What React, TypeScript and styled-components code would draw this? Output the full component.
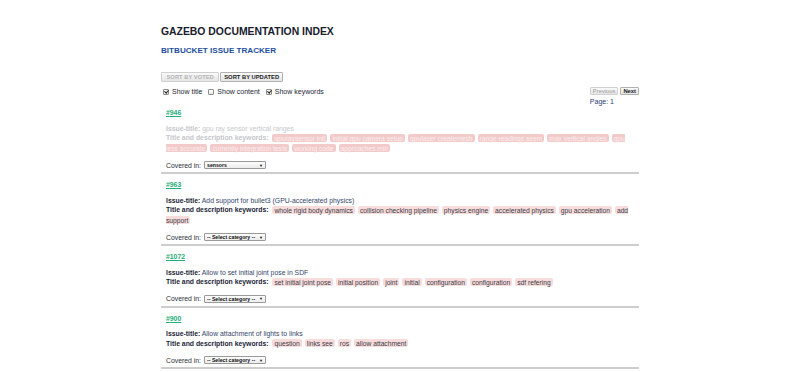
import React from "react";
import styled, { createGlobalStyle, css } from "styled-components";

interface Issue {
  id: number;
  title: string;
  keywords: string[];
  category: string;
  faded?: boolean;
}

const issues: Issue[] = [
  {
    id: 946,
    title: "gpu ray sensor vertical ranges",
    keywords: [
      "gpuraysensor init",
      "initial gpu camera setup",
      "gpulaser createmesh",
      "range readings seem",
      "max vertical angles",
      "gpu less accurate",
      "currently integration tests",
      "working code",
      "approaches min",
    ],
    category: "sensors",
    faded: true,
  },
  {
    id: 963,
    title: "Add support for bullet3 (GPU-accelerated physics)",
    keywords: [
      "whole rigid body dynamics",
      "collision checking pipeline",
      "physics engine",
      "accelerated physics",
      "gpu acceleration",
      "add support",
    ],
    category: "",
  },
  {
    id: 1072,
    title: "Allow to set initial joint pose in SDF",
    keywords: [
      "set initial joint pose",
      "initial position",
      "joint",
      "initial",
      "configuration",
      "configuration",
      "sdf refering",
    ],
    category: "",
  },
  {
    id: 900,
    title: "Allow attachment of lights to links",
    keywords: ["question", "links see", "ros", "allow attachment"],
    category: "",
  },
];

const categories = ["sensors", "physics", "rendering", "sdf", "ros"];

const App: React.FC = () => {
  return (
    <>
      <GlobalStyle />
      <Page>
        <Title>Gazebo Documentation Index</Title>
        <Subtitle>Bitbucket Issue Tracker</Subtitle>

        <SortBar>
          <SortButton disabled>Sort by voted</SortButton>
          <SortButton>Sort by updated</SortButton>
        </SortBar>

        <Toolbar>
          <Toggles>
            <Toggle>
              <Check type="checkbox" defaultChecked />
              Show title
            </Toggle>
            <Toggle>
              <Check type="checkbox" />
              Show content
            </Toggle>
            <Toggle>
              <Check type="checkbox" defaultChecked />
              Show keywords
            </Toggle>
          </Toggles>
          <Pager>
            <PagerButtons>
              <PagerButton disabled>Previous</PagerButton>
              <PagerButton $strong>Next</PagerButton>
            </PagerButtons>
            <PageLabel>Page: 1</PageLabel>
          </Pager>
        </Toolbar>

        <IssueList>
          {issues.map((issue) => (
            <IssueCard key={issue.id}>
              <IssueLink href="#">#{issue.id}</IssueLink>
              <Field $faded={issue.faded}>
                <Label>Issue-title:</Label> {issue.title}
              </Field>
              <Keywords $faded={issue.faded}>
                <Label>Title and description keywords:</Label>{" "}
                {issue.keywords.map((k, i) => (
                  <Tag key={i}>{k}</Tag>
                ))}
              </Keywords>
              <Covered>
                Covered in:
                <SelectWrap>
                  <CategorySelect defaultValue={issue.category}>
                    <option value="">-- Select category --</option>
                    {categories.map((c) => (
                      <option key={c} value={c}>
                        {c}
                      </option>
                    ))}
                  </CategorySelect>
                </SelectWrap>
              </Covered>
            </IssueCard>
          ))}
        </IssueList>
      </Page>
    </>
  );
};

const GlobalStyle = createGlobalStyle`
  body {
    margin: 0;
    background: #fff;
    font-family: "Liberation Sans", Arial, sans-serif;
    color: #1d2736;
  }
`;

const Page = styled.div`
  width: 478px;
  margin: 0 auto;
  padding-top: 26px;
`;

const Title = styled.h1`
  margin: 0;
  font-size: 10.4px;
  line-height: 12px;
  font-weight: bold;
  text-transform: uppercase;
  color: #17202c;
`;

const Subtitle = styled.h2`
  margin: 8px 0 0;
  font-size: 8.1px;
  line-height: 10px;
  font-weight: bold;
  text-transform: uppercase;
  color: #1d4f9e;
`;

const SortBar = styled.div`
  display: flex;
  gap: 1px;
  margin-top: 16px;
`;

const SortButton = styled.button`
  height: 10px;
  padding: 0 3px;
  font-family: inherit;
  font-size: 5.8px;
  font-weight: bold;
  text-transform: uppercase;
  line-height: 8px;
  color: #1a1a1a;
  background: linear-gradient(#fafafa, #e4e4e4);
  border: 1px solid #b0b0b0;
  border-radius: 1px;

  &:disabled {
    padding: 0 4.5px;
    color: #b4b4b4;
    border-color: #cfcfcf;
  }
`;

const Toolbar = styled.div`
  display: flex;
  justify-content: space-between;
  align-items: flex-start;
  height: 16px;
  margin-top: 4px;
`;

const Toggles = styled.div`
  display: flex;
  gap: 4px;
  margin-top: 1px;
`;

const Toggle = styled.label`
  display: flex;
  align-items: center;
  font-size: 7px;
  line-height: 9px;
  color: #1d2736;
`;

const Check = styled.input`
  appearance: none;
  position: relative;
  width: 6px;
  height: 6px;
  margin: 0 3px 0 2px;
  border: 1px solid #8c8c8c;
  border-radius: 1px;
  background: linear-gradient(#ffffff, #e8e8e8);

  &:checked::after {
    content: "";
    position: absolute;
    left: 1px;
    top: -0.5px;
    width: 1.6px;
    height: 3px;
    border: solid #222;
    border-width: 0 1px 1px 0;
    transform: rotate(40deg);
  }
`;

const Pager = styled.div`
  display: flex;
  flex-direction: column;
  align-items: flex-start;
  margin-top: 1px;
`;

const PagerButtons = styled.div`
  display: flex;
  gap: 2px;
`;

const PagerButton = styled.button<{ $strong?: boolean }>`
  height: 8px;
  padding: 0 2px;
  font-family: inherit;
  font-size: 5.8px;
  line-height: 6px;
  font-weight: ${(p) => (p.$strong ? "bold" : "normal")};
  color: #1a1a1a;
  background: linear-gradient(#fafafa, #e4e4e4);
  border: 1px solid #b0b0b0;
  border-radius: 1px;

  &:disabled {
    color: #9a9a9a;
    border-color: #cfcfcf;
  }
`;

const PageLabel = styled.div`
  margin-top: 2px;
  font-size: 7px;
  line-height: 9px;
  color: #1f3d73;
`;

const IssueList = styled.div`
  display: flex;
  flex-direction: column;
`;

const IssueCard = styled.article`
  padding: 6px 5px 2px;
  border-bottom: 2px solid #cdcdcd;
  font-size: 6.85px;
`;

const IssueLink = styled.a`
  display: block;
  line-height: 10px;
  font-weight: bold;
  color: #1fae78;
  text-decoration: underline;
`;

const Label = styled.b`
  color: #1b2538;
`;

const Field = styled.div<{ $faded?: boolean }>`
  margin-top: 5.5px;
  line-height: 9.5px;
  color: #34466a;

  ${(p) =>
    p.$faded &&
    css`
      color: #c6c8cc;
      ${Label} {
        color: #c4c6cb;
      }
    `}
`;

const Tag = styled.span`
  padding: 0.5px 2px;
  margin-right: 3px;
  border-radius: 2px;
  font-size: 6.7px;
  background: #f8dcdc;
  color: #3a3d48;
`;

const Keywords = styled.div<{ $faded?: boolean }>`
  line-height: 10.5px;

  ${Label} {
    margin-right: 2px;
  }

  ${(p) =>
    p.$faded &&
    css`
      ${Label} {
        color: #c4c6cb;
      }
      ${Tag} {
        background: #f2caca;
        color: #fbeeee;
      }
    `}
`;

const Covered = styled.div`
  display: flex;
  align-items: center;
  gap: 3px;
  margin-top: 6px;
  height: 10px;
  color: #2a2f3a;
`;

const SelectWrap = styled.span`
  position: relative;
  display: inline-flex;

  &::after {
    content: "▼";
    position: absolute;
    right: 3px;
    top: 1.5px;
    font-size: 4px;
    line-height: 5px;
    color: #111;
    pointer-events: none;
  }
`;

const CategorySelect = styled.select`
  appearance: none;
  width: 62px;
  height: 8px;
  padding: 0 8px 0 2px;
  font-family: inherit;
  font-size: 5.2px;
  line-height: 6px;
  font-weight: bold;
  border: 1px solid #9a9a9a;
  border-radius: 1px;
  background: linear-gradient(#fdfdfd, #ececec);
  color: #111;
`;

export default App;
